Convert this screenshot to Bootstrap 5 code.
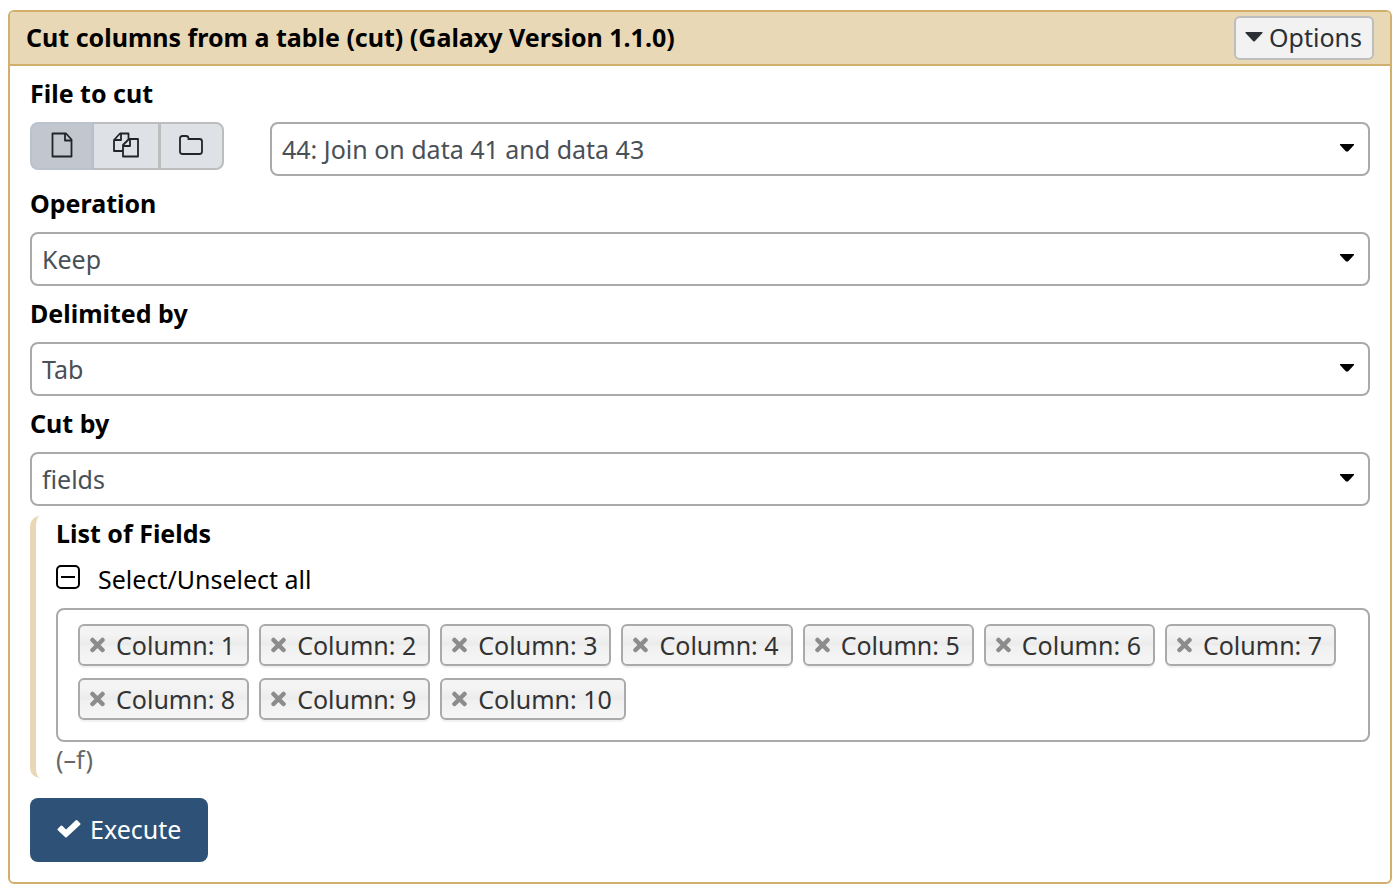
<!DOCTYPE html>
<html lang="en">
<head>
<meta charset="utf-8">
<meta name="viewport" content="width=device-width, initial-scale=1">
<title>Cut columns from a table</title>
<link href="https://cdn.jsdelivr.net/npm/bootstrap@5.3.0/dist/css/bootstrap.min.css" rel="stylesheet">
<style>
  body { font-family: "Noto Sans", sans-serif; font-size: 25px; line-height: 34px; color: #000; background: #fff; }
  .tool-card { margin: 10px 6px 8px 8px; border: 2px solid #d0b06c; border-radius: 6px; }
  .tool-head { background: #e9d8b6; border-bottom: 2px solid #d0b06c; border-radius: 4px 4px 0 0; padding: 4px 16px; min-height: 54px; }
  .tool-title { font-size: 25px; line-height: 34px; font-weight: 700; padding-bottom: 2px; }
  .tool-body { padding: 10px 20px 20px; }
  .field-title { display: block; font-size: 25px; line-height: 34px; font-weight: 700; margin-bottom: 12px; }
  .field-block { margin-bottom: 10px; }
  .btn-options { --bs-btn-font-size: 25px; line-height: 34px; padding: 2px 10px 4px 9px; gap: 6px; color: #2c3034; background: #f2f2f2; border: 2px solid #bdbdbd; border-radius: 6px; }
  .form-select.tool-select { font-size: 25px; line-height: 34px; height: 54px; padding: 8px 40px 8px 10px; color: #495057; border: 2px solid #aaa; border-radius: 8px;
    background-image: url("data:image/svg+xml,%3Csvg xmlns='http://www.w3.org/2000/svg' viewBox='0 0 14 8'%3E%3Cpath d='M0 0h14v1L8 7.500H6L0 1z'/%3E%3C/svg%3E");
    background-size: 14px 8px; background-position: right 14px top 20px; }
  .source-group { width: 194px; margin-right: 46px; }
  .source-group .btn { height: 48px; padding: 0; display: flex; align-items: center; justify-content: center; color: #212529; background: #dee2e6; border: 2px solid #bdbdbd; border-radius: 8px; }
  .source-group .btn-check:checked + .btn { background: #c1c6cf; border-color: #b9c2cd; color: #212529; }
  .source-group .btn svg { margin-bottom: 2px; }
  .nested { border-left: 6px solid #e9d8b6; border-radius: 10px; padding-left: 20px; margin-bottom: 20px; }
  .all-row { height: 34px; margin-bottom: 12px; }
  .form-check-input.all-check { width: 24px; height: 24px; margin: 0 18px 4px 0; border: 2px solid #000; border-radius: 5px; }
  .form-check-input.all-check:indeterminate { background-color: #fff; border-color: #000; background-size: 16px 16px; background-position: center;
    background-image: url("data:image/svg+xml,%3Csvg xmlns='http://www.w3.org/2000/svg' viewBox='0 0 16 16'%3E%3Cpath d='M1 8h14' stroke='%23000' stroke-width='2'/%3E%3C/svg%3E"); }
  .chip-box { border: 2px solid #aaa; border-radius: 8px; padding: 14px 20px 20px; gap: 12px 10px; }
  .chip { height: 42px; min-width: 171px; padding: 0 12px 0 9px; color: #333; border: 2px solid #aaa; border-radius: 6px;
    background: linear-gradient(#f4f4f4 20%, #ebebeb 50%, #f0f0f0 52%, #f6f6f6); box-shadow: 0 2px 1px rgba(0,0,0,.06); }
  .chip button { line-height: 0; color: #8c8c8c; margin-right: 10px; }
  .help-note { color: #666; padding-bottom: 2px; }
  .btn-execute { --bs-btn-font-size: 25px; line-height: 34px; height: 64px; padding: 0 27px 2px; gap: 9px; color: #fff; background: #2e5277; border-radius: 8px; border: 0; }
  .btn-execute:hover { color: #fff; background: #24466a; }
</style>
</head>
<body>
<main class="tool-card">
  <header class="tool-head d-flex align-items-center justify-content-between">
    <h1 class="tool-title mb-0">Cut columns from a table (cut) (Galaxy Version 1.1.0)</h1>
    <button type="button" class="btn btn-options d-flex align-items-center">
      <svg width="18" height="10" viewBox="0 0 18 10" fill="currentColor" aria-hidden="true"><path d="M1 0h16q1 0 .5 1L10 9q-1 1-2 0L.5 1Q0 0 1 0z"/></svg>
      <span>Options</span>
    </button>
  </header>
  <form class="tool-body">
    <div class="field-block">
      <label class="field-title" for="source">File to cut</label>
      <div class="d-flex align-items-start">
        <div class="btn-group source-group flex-shrink-0" role="group" aria-label="Input type">
          <input type="radio" class="btn-check" name="kind" id="kind-one" checked>
          <label class="btn" for="kind-one" aria-label="Single dataset">
            <svg width="22" height="26" viewBox="0 0 22 26" fill="none" stroke="currentColor" stroke-width="1.800" stroke-linejoin="round"><path d="M1.500 1.500H15l5.500 6v17h-19z"/><path d="M14 1.500V8.500h6.500"/></svg>
          </label>
          <input type="radio" class="btn-check" name="kind" id="kind-many">
          <label class="btn" for="kind-many" aria-label="Multiple datasets">
            <svg width="26" height="26" viewBox="0 0 26 26" fill="none" stroke="currentColor" stroke-width="1.800" stroke-linejoin="round"><path d="M10 19H1V8l6-6.500h8.500V7"/><path d="M8 1.500V8H1"/><path d="M10 24.500V13l6-6h9v17.500z"/><path d="M17 7v7h-7"/></svg>
          </label>
          <input type="radio" class="btn-check" name="kind" id="kind-set">
          <label class="btn" for="kind-set" aria-label="Dataset collection">
            <svg width="24" height="20" viewBox="0 0 24 20" fill="none" stroke="currentColor" stroke-width="1.800"><path d="M1 3.500Q1 1 3.500 1H7q2.500 0 2.500 2.500v.500H20.500Q23 4 23 6.500v10Q23 19 20.500 19h-17Q1 19 1 16.500z"/></svg>
          </label>
        </div>
        <select class="form-select tool-select flex-fill" id="source"><option>44: Join on data 41 and data 43</option></select>
      </div>
    </div>
    <div class="field-block">
      <label class="field-title" for="operation">Operation</label>
      <select class="form-select tool-select" id="operation"><option>Keep</option></select>
    </div>
    <div class="field-block">
      <label class="field-title" for="delimiter">Delimited by</label>
      <select class="form-select tool-select" id="delimiter"><option>Tab</option></select>
    </div>
    <div class="field-block">
      <label class="field-title" for="cutby">Cut by</label>
      <select class="form-select tool-select" id="cutby"><option>fields</option></select>
    </div>
    <section class="nested">
      <h2 class="field-title">List of Fields</h2>
      <div class="all-row d-flex align-items-center">
        <input class="form-check-input all-check" type="checkbox" id="all">
        <label for="all">Select/Unselect all</label>
      </div>
      <div class="chip-box d-flex flex-wrap" id="chips"></div>
      <div class="help-note">(–f)</div>
    </section>
    <button type="button" class="btn btn-execute d-flex align-items-center">
      <svg width="24" height="20" viewBox="0 0 24 20" fill="currentColor" stroke="currentColor" stroke-width="2" stroke-linejoin="round" aria-hidden="true"><path d="M1.500 10.500L4.500 7.500L9 12L19.500 2L22.500 5L9 17.500z"/></svg>
      <span>Execute</span>
    </button>
  </form>
</main>
<script src="https://cdn.jsdelivr.net/npm/bootstrap@5.3.0/dist/js/bootstrap.bundle.min.js"></script>
<script>
  document.getElementById('all').indeterminate = true;
  const chips = document.getElementById('chips');
  for (let n = 1; n <= 10; n++) {
    chips.insertAdjacentHTML('beforeend', `<div class="chip d-flex align-items-center">
      <button type="button" class="btn p-0 border-0" aria-label="Remove column ${n}"><svg width="17" height="16" viewBox="0 0 17 16" fill="none" stroke="currentColor" stroke-width="4.500" stroke-linecap="round"><path d="M3.500 3l10 10M13.500 3l-10 10"/></svg></button>
      <span>Column: ${n}</span></div>`);
  }
</script>
</body>
</html>
